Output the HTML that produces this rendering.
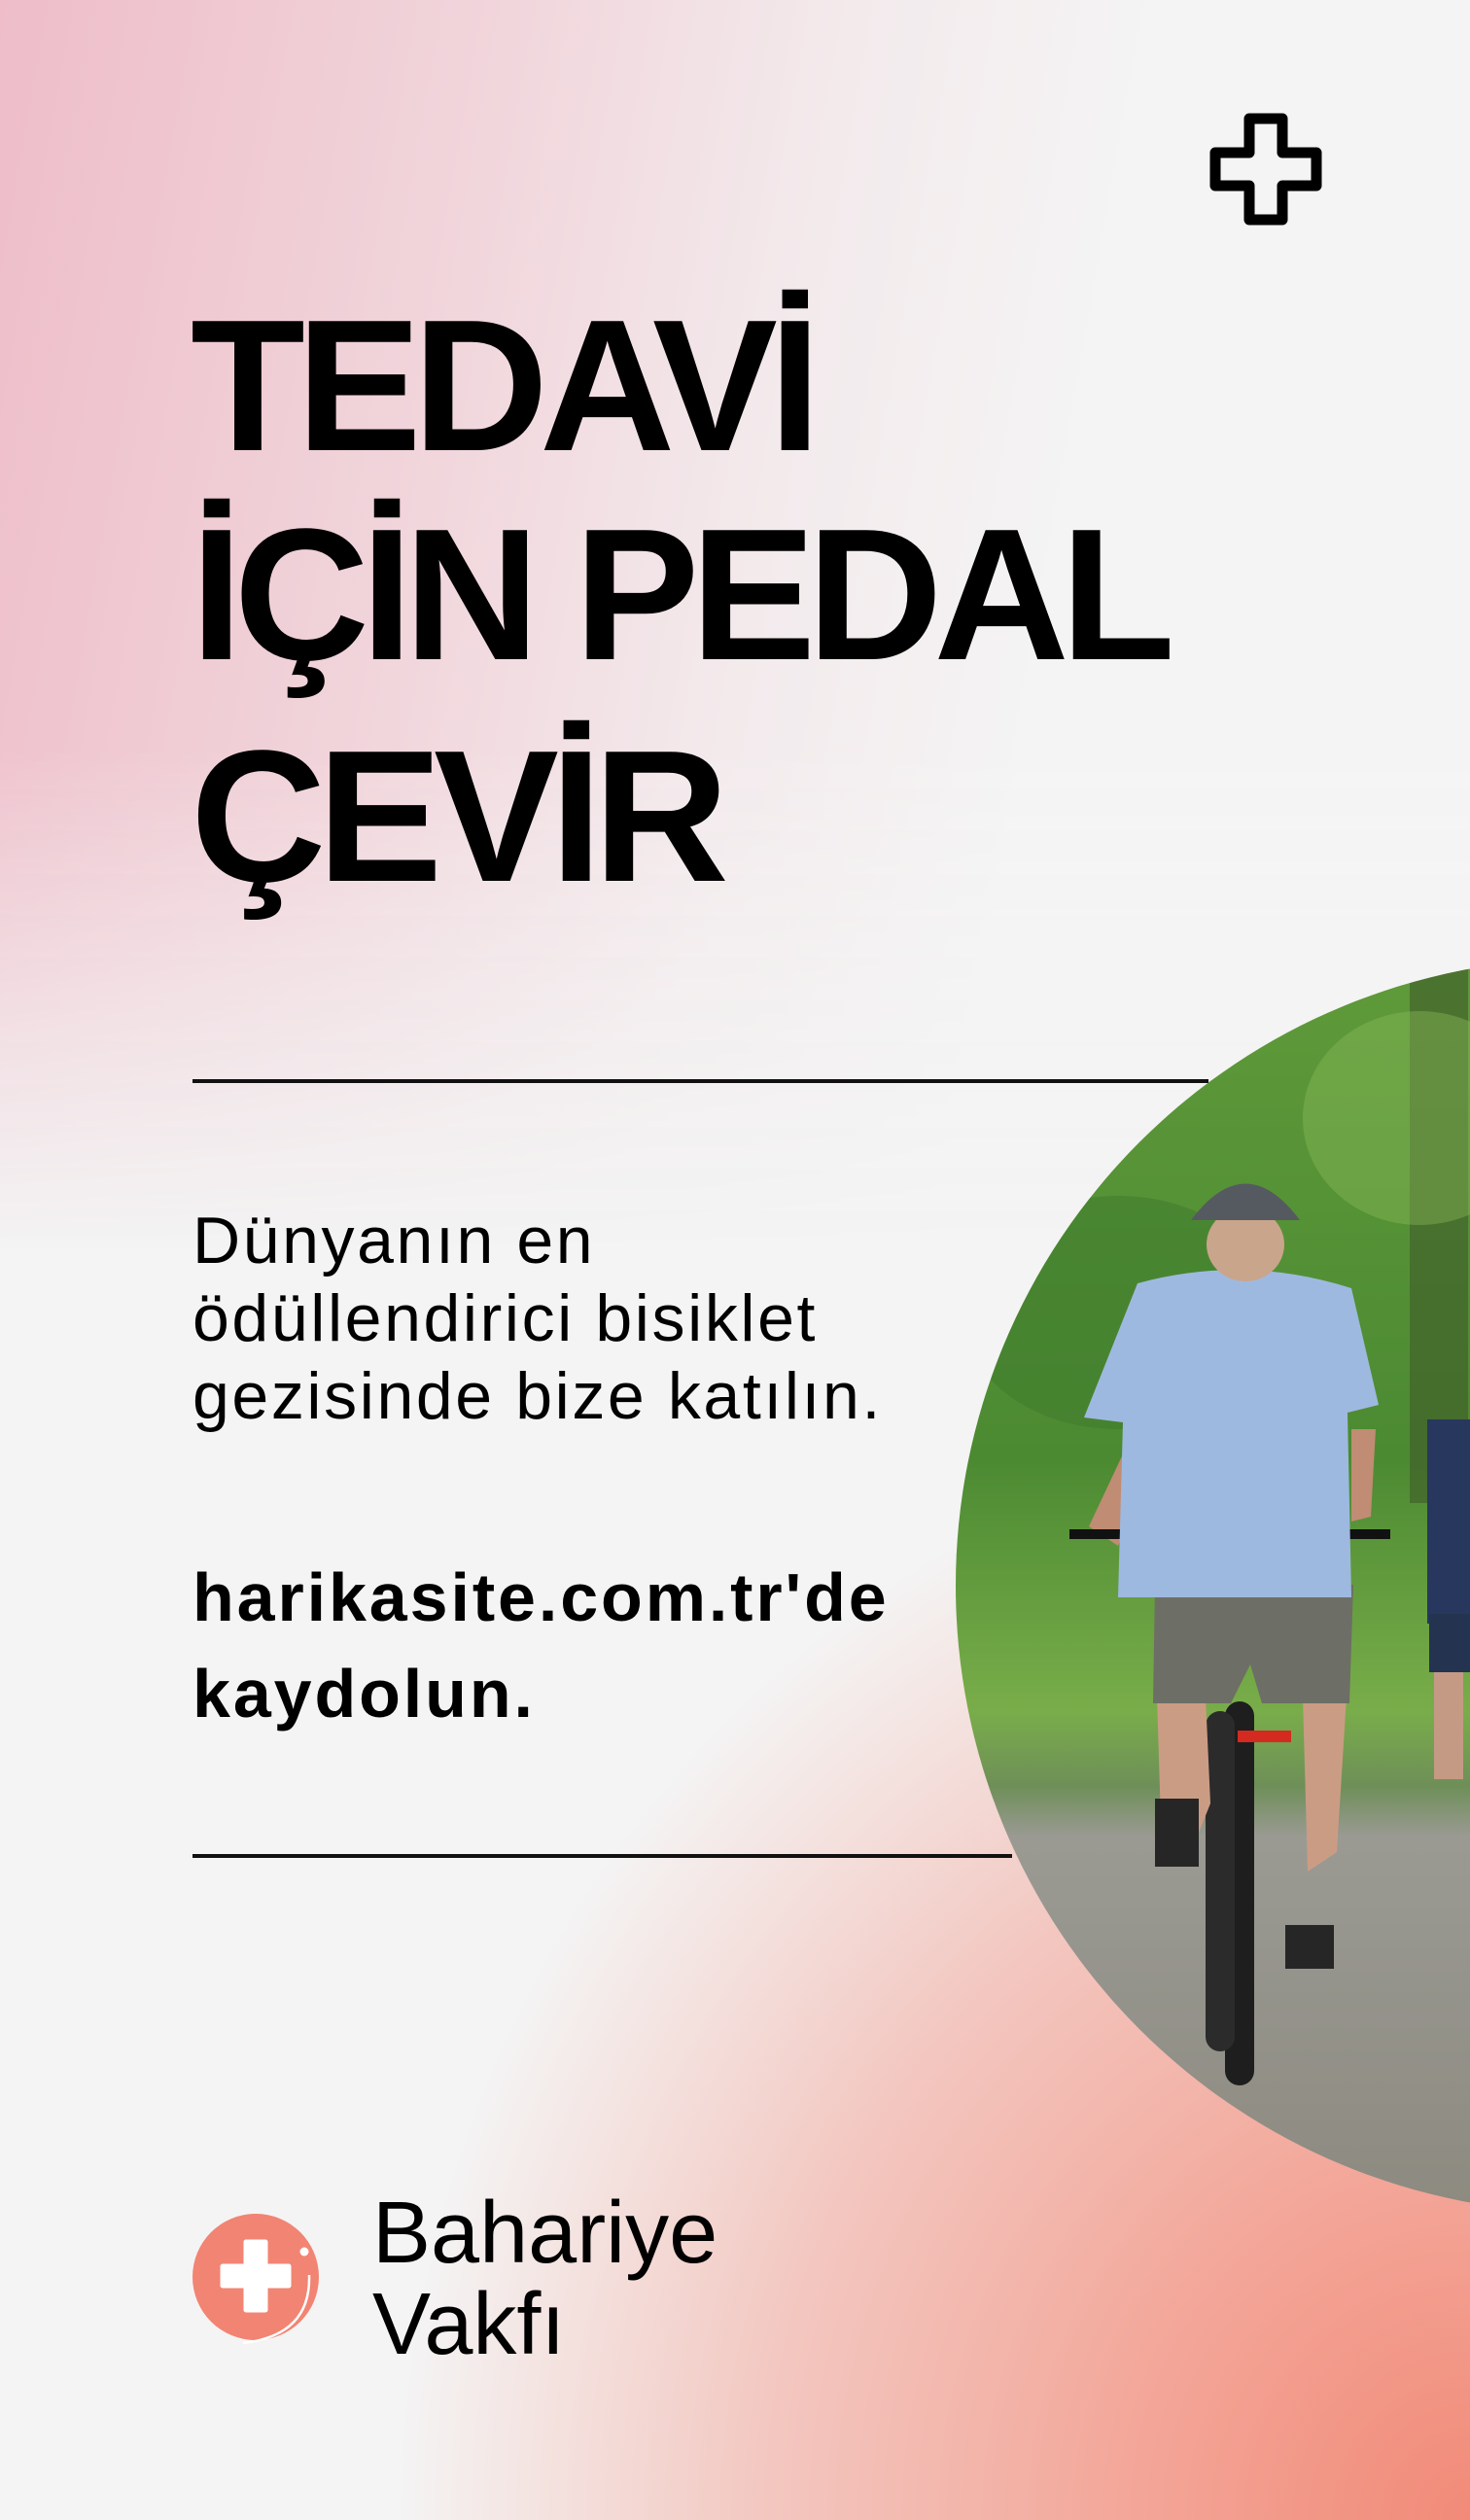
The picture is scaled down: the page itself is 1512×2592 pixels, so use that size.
<!DOCTYPE html>
<html><head><meta charset="utf-8">
<style>
html,body{margin:0;padding:0}
body{width:1512px;height:2592px;position:relative;overflow:hidden;background:#f4f4f4;font-family:"Liberation Sans",sans-serif;color:#000}
.bgtop{position:absolute;left:0;top:0;width:1512px;height:1400px;background:linear-gradient(100deg,#eebdc9 0%,#f1d6dc 30%,#f3eaec 50%,#f4f4f4 68%);-webkit-mask-image:linear-gradient(to bottom,#000 0%,#000 55%,transparent 92%);mask-image:linear-gradient(to bottom,#000 0%,#000 55%,transparent 92%)}
.bgbot{position:absolute;left:0;top:1100px;width:1512px;height:1492px;background:radial-gradient(ellipse 1300px 1350px at 100% 100%,#f28a78 0%,#f3a496 25%,#f3c6bf 55%,rgba(244,244,244,0) 85%)}
.title{position:absolute;left:196px;font-weight:bold;font-size:193px;letter-spacing:-9px;line-height:1;white-space:nowrap}
.rule{position:absolute;height:4px;background:#111;left:198px}
.p{position:absolute;left:198px;font-size:68px;letter-spacing:2.6px;line-height:80px;white-space:nowrap}
.b{position:absolute;left:198px;font-size:70px;letter-spacing:2.9px;line-height:99px;font-weight:bold;white-space:nowrap}
.clip{position:absolute;left:983px;top:986px;width:529px;height:1290px;overflow:hidden}
.photo{position:absolute;left:0;top:0;width:1290px;height:1290px;border-radius:50%;overflow:hidden}
.logo{position:absolute;left:383px;font-size:90px;line-height:94px;white-space:nowrap}
</style></head><body>
<div class="bgtop"></div>
<div class="bgbot"></div>

<svg style="position:absolute;left:1240px;top:110px" width="128" height="128" viewBox="1240 110 128 128">
<path d="M1285 122h34v35h35v34h-35v35h-34v-35h-35v-34h35z" fill="none" stroke="#000" stroke-width="11" stroke-linejoin="round"/>
</svg>

<div class="title" style="top:300px">TEDAVİ</div>
<div class="title" style="top:515px">İÇİN PEDAL</div>
<div class="title" style="top:743px">ÇEVİR</div>

<div class="rule" style="top:1110px;width:1045px"></div>
<div class="rule" style="top:1907px;width:843px"></div>

<div class="p" style="top:1236px">Dünyanın en<br>ödüllendirici bisiklet<br>gezisinde bize katılın.</div>
<div class="b" style="top:1594px">harikasite.com.tr'de<br>kaydolun.</div>

<div class="clip"><div class="photo">
<svg width="1290" height="1290" viewBox="983 986 1290 1290">
<defs>
<linearGradient id="g" x1="0" y1="0" x2="0" y2="1"><stop offset="0" stop-color="#5f9a3a"/><stop offset="0.4" stop-color="#4c8a32"/><stop offset="0.6" stop-color="#79ad4a"/><stop offset="0.66" stop-color="#6e8f58"/><stop offset="0.7" stop-color="#9a9a93"/><stop offset="1" stop-color="#8d8a80"/></linearGradient>
</defs>
<rect x="983" y="986" width="1290" height="1290" fill="url(#g)"/>
<rect x="1450" y="986" width="60" height="560" fill="#3f5a2a" opacity=".6"/>
<ellipse cx="1150" cy="1350" rx="160" ry="120" fill="#3e7a2c" opacity=".5"/>
<ellipse cx="1460" cy="1150" rx="120" ry="110" fill="#8cbc5a" opacity=".4"/>
<path d="M1468 1460h50v210h-50z" fill="#27375e"/>
<path d="M1470 1660h45v60h-45z" fill="#24334f"/>
<path d="M1475 1720h30v110h-30z" fill="#c49a84"/>
<path d="M1120 1570l40-85 30 10-40 95z" fill="#c08c73"/>
<path d="M1390 1470l25 0 -5 90 -20 5z" fill="#c08c73"/>
<path d="M1100 1578h330" stroke="#111" stroke-width="10"/>
<rect x="1260" y="1750" width="30" height="395" rx="15" fill="#1e1e1e"/>
<rect x="1240" y="1760" width="30" height="350" rx="15" fill="#2b2b2b"/>
<rect x="1273" y="1780" width="55" height="12" fill="#d42a1f"/>
<path d="M1190 1745h50l5 110-20 50h-30z" fill="#cb9c84"/>
<path d="M1340 1745h45l-10 160-30 20z" fill="#cb9c84"/>
<path d="M1188 1850h45v70h-45z" fill="#262626"/>
<path d="M1322 1980h50v45h-50z" fill="#262626"/>
<path d="M1188 1630h204l-4 122h-90l-12-40-20 40h-80z" fill="#6d6e65"/>
<path d="M1170 1320q110-30 220 5l28 120-32 8 4 190h-240l5-180-40-5z" fill="#9eb9df"/>
<ellipse cx="1281" cy="1280" rx="40" ry="38" fill="#c9a58c"/>
<path d="M1225 1255q56-75 112 0z" fill="#555a60"/>
</svg>
</div></div>

<svg style="position:absolute;left:190px;top:2272px" width="150" height="150" viewBox="190 2272 150 150">
<circle cx="263" cy="2342" r="65" fill="#f28473"/>
<path d="M253 2306h20v25h24v20h-24v25h-20v-25h-24v-20h24z" fill="#fff" stroke="#fff" stroke-width="5" stroke-linejoin="round"/>
<circle cx="313" cy="2316" r="4.5" fill="#fff"/>
<path d="M318 2340q2 62-68 70" fill="none" stroke="#fff" stroke-width="2.5"/>
</svg>
<div class="logo" style="top:2250px">Bahariye<br>Vakfı</div>
</body></html>
